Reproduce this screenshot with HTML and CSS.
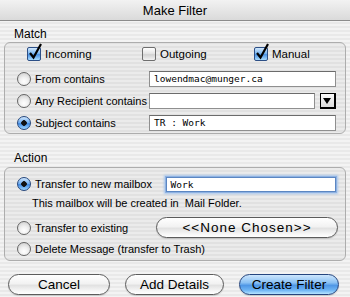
FILE: index.html
```html
<html><head>
  <title>Make Filter</title>
  <link rel="stylesheet" href="styles.css">
</head>
<body>
  <div class="titlebar">Make Filter</div>

  <div class="section-label">Match</div>
  <div class="group match">
    <div class="checks">
      <div class="check on">
        <span class="box"><svg class="tick" width="16" height="18" viewBox="0 0 16 18"><path d="M3 10 L6.5 14.5 L14 1" fill="none" stroke="#000" stroke-width="2.2"/></svg></span>
        Incoming
      </div>
      <div class="check">
        <span class="box"></span>
        Outgoing
      </div>
      <div class="check on">
        <span class="box"><svg class="tick" width="16" height="18" viewBox="0 0 16 18"><path d="M3 10 L6.5 14.5 L14 1" fill="none" stroke="#000" stroke-width="2.2"/></svg></span>
        Manual
      </div>
    </div>

    <div class="row first">
      <div class="opt"><span class="radio"></span>From contains</div>
      <div class="field">lowendmac@munger.ca</div>
    </div>
    <div class="row">
      <div class="opt"><span class="radio"></span>Any Recipient contains</div>
      <div class="field short"></div>
      <span class="dropdown"></span>
    </div>
    <div class="row">
      <div class="opt"><span class="radio on"></span>Subject contains</div>
      <div class="field">TR : Work</div>
    </div>
  </div>

  <div class="section-label action-label">Action</div>
  <div class="group action">
    <div class="row">
      <div class="opt wide"><span class="radio on"></span>Transfer to new mailbox</div>
      <div class="field focused">Work</div>
    </div>
    <div class="note">This mailbox will be created in &nbsp;Mail Folder.</div>
    <div class="row tall">
      <div class="opt mid"><span class="radio"></span>Transfer to existing</div>
      <div class="button chooser">&lt;&lt;None Chosen&gt;&gt;</div>
    </div>
    <div class="row last">
      <div class="opt"><span class="radio"></span>Delete Message (transfer to Trash)</div>
    </div>
  </div>

  <div class="buttons">
    <div class="button cancel">Cancel</div>
    <div class="button details">Add Details</div>
    <div class="button default">Create Filter</div>
  </div>
</body></html>
```

FILE: styles.css
```css
/* Aqua style sheet dialog */
body {
  margin: 0;
  width: 350px;
  height: 297px;
  overflow: hidden;
  font-family: "Liberation Sans", Arial, sans-serif;
  font-size: 11px;
  color: #000;
  background: repeating-linear-gradient(to bottom, #f3f3f3 0 2px, #e9e9e9 2px 4px);
}

.titlebar {
  height: 21px;
  box-sizing: border-box;
  border-bottom: 1px solid #8c8c8c;
  background: linear-gradient(#f2f2f2, #dadada);
  text-align: center;
  font-size: 13px;
  line-height: 21px;
}

.section-label {
  margin-top: 6px;
  margin-bottom: 1px;
  padding-left: 14px;
  height: 14px;
  line-height: 14px;
  font-size: 12px;
}

.action-label {
  margin-top: 17px;
  margin-bottom: 2px;
}

.group {
  margin: 0 4px;
  border: 1px solid #adadad;
  border-radius: 6px;
  background: rgba(0, 0, 0, 0.03);
  padding: 4px 9px 1px 12px;
}

.group.action {
  padding-top: 3px;
  padding-bottom: 2px;
}

.checks {
  display: flex;
  height: 14px;
  margin-left: 10px;
}

.check {
  display: flex;
  align-items: center;
  gap: 4px;
  line-height: 14px;
  font-size: 11.5px;
}

.check:nth-child(1) { width: 115px; }
.check:nth-child(2) { width: 112px; }

.box {
  position: relative;
  width: 14px;
  height: 14px;
  box-sizing: border-box;
  border: 1px solid #6e6e6e;
  border-radius: 2px;
  background: linear-gradient(#ffffff, #e2e2e2 50%, #d2d2d2 55%, #f2f2f2);
}

.check.on .box {
  border-color: #2c4f86;
  background: linear-gradient(#d2e8fd, #7ab6f0 45%, #4a92e4 55%, #a8dcff);
}

.tick {
  position: absolute;
  left: -1px;
  top: -5px;
}

.row {
  display: flex;
  align-items: center;
  height: 18px;
  margin-top: 4px;
}

.row.first {
  margin-top: 9px;
}

.opt {
  display: flex;
  align-items: center;
  gap: 4px;
  width: 132px;
  white-space: nowrap;
}

.opt.wide { width: 147px; }
.opt.mid { width: 139px; }

.radio {
  width: 14px;
  height: 14px;
  box-sizing: border-box;
  border: 1px solid #666;
  border-radius: 50%;
  background: radial-gradient(circle at 50% 70%, #ffffff 0, #f0f0f0 40%, #c8c8c8 100%);
  flex: none;
}

.radio.on {
  border-color: #26477c;
  background: radial-gradient(circle at 50% 50%, #111 0 2.5px, transparent 3px),
              linear-gradient(#cfe6fd, #6aaaf0 50%, #3e88e2 55%, #9fd6ff);
}

.field {
  width: 187px;
  height: 16px;
  box-sizing: border-box;
  border: 1px solid #8f8f8f;
  border-top-color: #6b6b6b;
  background: #fff;
  font-family: "DejaVu Sans Mono", monospace;
  font-size: 9.5px;
  line-height: 14px;
  padding-left: 4px;
}

.field.short {
  width: 167px;
}

.field.focused {
  width: 171px;
  height: 15px;
  margin-left: 2px;
  border-color: #5b86c2;
  box-shadow: 0 0 0 1px #8eb2e2, 0 0 2px 2px #a9c6ec;
}

.dropdown {
  position: relative;
  width: 16px;
  height: 16px;
  box-sizing: border-box;
  margin-left: 5px;
  border: 2px solid #000;
  border-top-width: 1px;
  border-left-width: 1px;
  background: linear-gradient(#fafafa, #dcdcdc);
}

.dropdown::after {
  content: "";
  position: absolute;
  left: 2px;
  top: 4px;
  border-left: 4.5px solid transparent;
  border-right: 4.5px solid transparent;
  border-top: 6px solid #000;
}

.note {
  margin-top: 3px;
  height: 14px;
  line-height: 14px;
  padding-left: 15px;
}

.row.tall {
  height: 21px;
  margin-top: 7px;
}

.row.last {
  margin-top: 2px;
}

.button {
  height: 21px;
  box-sizing: border-box;
  border: 1px solid #5c5c5c;
  border-radius: 11px;
  background: linear-gradient(#ffffff, #f2f2f2 45%, #e2e2e2 55%, #f7f7f7 85%, #ffffff);
  box-shadow: 0 1px 1px rgba(0, 0, 0, 0.15);
  text-align: center;
  font-size: 13.5px;
  line-height: 19px;
}

.chooser {
  width: 182px;
  margin-right: -2px;
  letter-spacing: 1px;
}

.buttons {
  display: flex;
  margin-top: 13px;
  padding-left: 8px;
  gap: 15px;
}

.cancel { width: 102px; }
.details { width: 99px; }
.default {
  width: 100px;
  border-color: #25457e;
  background: linear-gradient(#cde6fd, #8cc2f4 40%, #4f97e6 55%, #6fb5f4 80%, #b6e4ff);
}
```
